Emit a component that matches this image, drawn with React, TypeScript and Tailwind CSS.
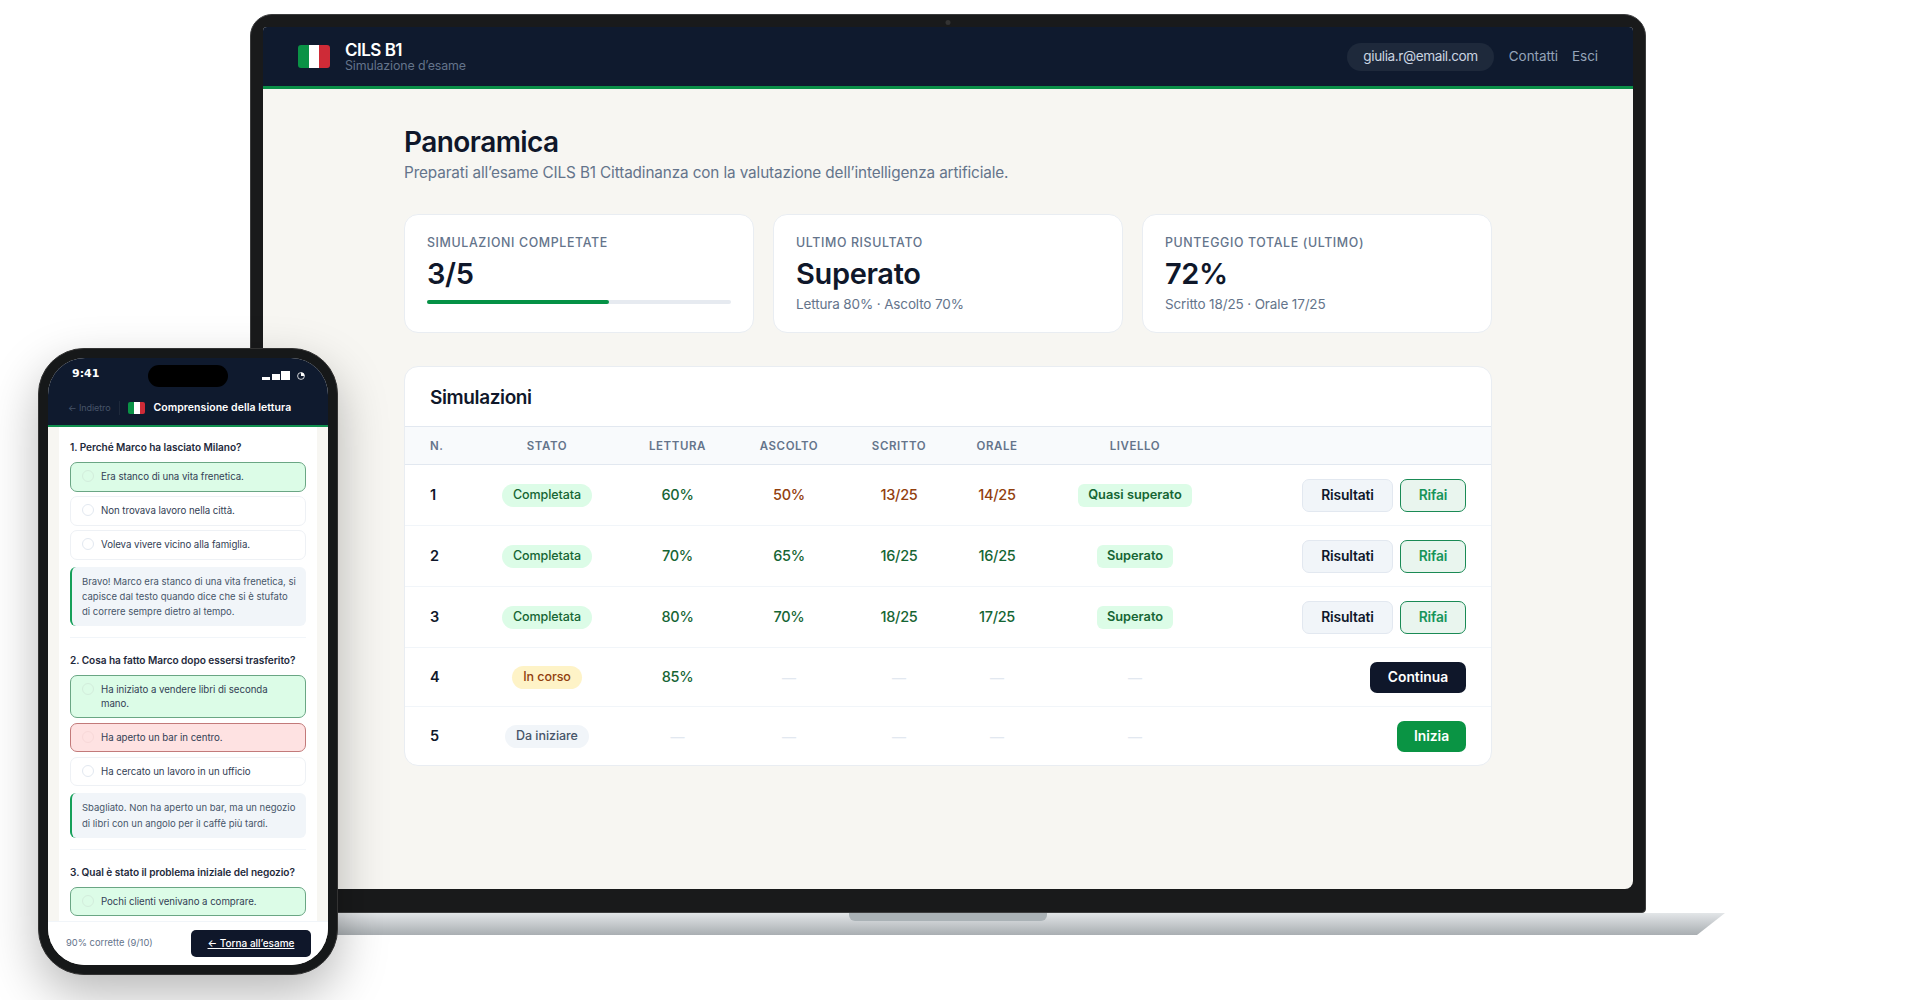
import React from "react";

function Flag({ className }: { className: string }) {
  return (
    <div className={`flex overflow-hidden shrink-0 ${className}`}>
      <div className="flex-1 bg-[#0a9246]" />
      <div className="flex-1 bg-white" />
      <div className="flex-1 bg-[#ce2b37]" />
    </div>
  );
}

function Stat({ label, value, sub, bar }: { label: string; value: string; sub?: string; bar?: boolean }) {
  return (
    <div className="h-[119px] rounded-[14px] border border-[#e9edf2] bg-white px-[22px] pt-[20px]">
      <div className="text-[12.4px] leading-[16px] font-medium tracking-[0.05em] uppercase text-[#64748b]">{label}</div>
      <div className="mt-[5px] text-[29px] leading-[36px] font-semibold tracking-[-0.012em] text-[#0f172a]">{value}</div>
      {sub && <div className="mt-[2px] text-[13.5px] leading-[20px] tracking-[-0.01em] text-[#64748b]">{sub}</div>}
      {bar && (
        <div className="mt-[8px] h-[4px] rounded-full bg-[#e6eaf0]">
          <div className="h-full w-[60%] rounded-full bg-[#059145]" />
        </div>
      )}
    </div>
  );
}

const cols = "grid grid-cols-[82px_120px_141px_82px_138px_58px_218px_247px] items-center";

function Score({ v }: { v: string }) {
  if (v === "—") return <div className="text-center text-[14px] text-[#e2e8f0]">—</div>;
  const bad = v === "50%" || v === "13/25" || v === "14/25";
  return (
    <div className={`text-center text-[14.5px] font-medium tracking-[-0.02em] ${bad ? "text-[#92400e]" : "text-[#166534]"}`}>
      {v}
    </div>
  );
}

function Risultati() {
  return (
    <button className="h-[33px] w-[91px] rounded-[7px] border border-[#e2e8f0] bg-[#f1f5f9] text-[13.8px] font-semibold tracking-[-0.01em] text-[#0f172a]">
      Risultati
    </button>
  );
}
function Rifai() {
  return (
    <button className="h-[33px] w-[66px] rounded-[7px] border-[1.5px] border-[#1a8a55] bg-[#e9f5ee] text-[13.8px] font-semibold tracking-[-0.01em] text-[#17945a]">
      Rifai
    </button>
  );
}

function Row({
  n, stato, statoCls, s, livello, last, h,
}: {
  n: string; stato: string; statoCls: string; s: string[]; livello?: string; last: React.ReactNode; h: string;
}) {
  return (
    <div className={`${cols} ${h} border-b border-[#f1f5f9] last:border-b-0`}>
      <div className="pl-[25px] text-[14.5px] font-semibold text-[#0f172a]">{n}</div>
      <div className="flex justify-center">
        <span className={`rounded-full px-[11px] h-[23px] flex items-center pt-[1px] text-[12.5px] font-medium tracking-[-0.005em] ${statoCls}`}>{stato}</span>
      </div>
      {s.map((v, i) => <Score key={i} v={v} />)}
      <div className="flex justify-center">
        {livello ? (
          <span className="flex h-[23px] items-center rounded-[6px] bg-[#dcfce7] px-[10px] text-[12.8px] font-semibold text-[#166534]">{livello}</span>
        ) : (
          <span className="text-[14px] text-[#e2e8f0]">—</span>
        )}
      </div>
      <div className="flex justify-end gap-[7px] pr-[25px]">{last}</div>
    </div>
  );
}

function Opt({ t, kind }: { t: string; kind?: "ok" | "ko" }) {
  const cls =
    kind === "ok"
      ? "border-[#6aa684] bg-[#dcfce7]"
      : kind === "ko"
      ? "border-[#c27a7a] bg-[#fee2e2]"
      : "border-[#eef1f5] bg-white";
  const radio = kind === "ok" ? "border-[#d3eddc]" : kind === "ko" ? "border-[#f8d9d9]" : "border-[#e2e8f0]";
  return (
    <div className={`flex items-start rounded-[7px] border px-[11px] py-[7px] ${cls}`}>
      <span className={`mr-[7px] h-[12px] w-[12px] shrink-0 rounded-full border-[1.5px] ${radio}`} />
      <span className="text-[9.7px] leading-[13.5px] tracking-[-0.005em] text-[#334155]">{t}</span>
    </div>
  );
}

function Feedback({ children }: { children: React.ReactNode }) {
  return (
    <div className="mt-[7px] rounded-[6px] border-l-2 border-[#16a05a] bg-[#f1f5f9] px-[10px] py-[7px] text-[9.5px] leading-[15.3px] text-[#475569]">
      {children}
    </div>
  );
}

function Q({ children }: { children: React.ReactNode }) {
  return <div className="mb-[8px] text-[10.1px] leading-[14px] font-semibold tracking-[-0.005em] text-[#1e293b]">{children}</div>;
}

export default function App() {
  return (
    <div className="relative h-[1000px] w-[1920px] overflow-hidden bg-white font-['Inter',sans-serif]">
      {/* Laptop */}
      <div className="ml-[250px] pt-[14px] w-[1396px]">
        <div className="relative h-[899px] rounded-t-[22px] rounded-b-[4px] border border-[#3b3c3d] bg-[#191a1b] px-[12px] pt-[12px]">
          <div className="absolute left-1/2 top-[5px] h-[5px] w-[5px] -translate-x-1/2 rounded-full bg-[#333]" />
          <div className="flex h-[862px] flex-col overflow-hidden rounded-b-[8px] rounded-t-[4px] bg-[#f7f6f2]">
            <header className="flex h-[62px] shrink-0 items-center border-b-[3px] border-[#0a8f47] bg-[#0f1a2e] pl-[35px] pr-[35px]">
              <Flag className="h-[23px] w-[32px] rounded-[3px]" />
              <div className="ml-[15px]">
                <div className="text-[17px] leading-[18px] font-semibold tracking-[-0.03em] text-white">CILS B1</div>
                <div className="text-[12.4px] leading-[14px] tracking-[-0.01em] text-[#64748b]">Simulazione d’esame</div>
              </div>
              <div className="ml-auto flex h-[28px] items-center rounded-full bg-[#1e293b] px-[16px] text-[13.6px] tracking-[-0.03em] text-[#cbd5e1]">
                giulia.r@email.com
              </div>
              <span className="ml-[15px] text-[13.5px] tracking-[-0.005em] text-[#94a3b8]">Contatti</span>
              <span className="ml-[14px] text-[13.5px] tracking-[-0.005em] text-[#94a3b8]">Esci</span>
            </header>
            <main className="px-[141px] pt-[36px]">
              <h1 className="text-[28px] leading-[34px] font-semibold tracking-[-0.02em] text-[#0f172a]">Panoramica</h1>
              <p className="mt-[3px] text-[15.3px] leading-[22px] tracking-[-0.008em] text-[#64748b]">
                Preparati all’esame CILS B1 Cittadinanza con la valutazione dell’intelligenza artificiale.
              </p>
              <div className="mt-[30px] grid grid-cols-3 gap-[19px]">
                <Stat label="Simulazioni completate" value="3/5" bar />
                <Stat label="Ultimo risultato" value="Superato" sub="Lettura 80% · Ascolto 70%" />
                <Stat label="Punteggio totale (ultimo)" value="72%" sub="Scritto 18/25 · Orale 17/25" />
              </div>
              <div className="mt-[33px] overflow-hidden rounded-[14px] border border-[#e9edf2] bg-white">
                <div className="flex h-[59px] items-center pl-[25px] pt-[3px] text-[19px] font-semibold tracking-[-0.02em] text-[#0f172a]">Simulazioni</div>
                <div className={`${cols} h-[39px] border-y border-[#e2e8f0] bg-[#f8fafc] pt-[2px] text-[11.5px] font-semibold tracking-[0.05em] text-[#64748b]`}>
                  <div className="pl-[25px]">N.</div>
                  <div className="text-center">STATO</div>
                  <div className="text-center">LETTURA</div>
                  <div className="text-center">ASCOLTO</div>
                  <div className="text-center">SCRITTO</div>
                  <div className="text-center">ORALE</div>
                  <div className="text-center">LIVELLO</div>
                  <div />
                </div>
                <Row h="h-[61px]" n="1" stato="Completata" statoCls="bg-[#dcfce7] text-[#166534]" s={["60%", "50%", "13/25", "14/25"]} livello="Quasi superato" last={<><Risultati /><Rifai /></>} />
                <Row h="h-[61px]" n="2" stato="Completata" statoCls="bg-[#dcfce7] text-[#166534]" s={["70%", "65%", "16/25", "16/25"]} livello="Superato" last={<><Risultati /><Rifai /></>} />
                <Row h="h-[61px]" n="3" stato="Completata" statoCls="bg-[#dcfce7] text-[#166534]" s={["80%", "70%", "18/25", "17/25"]} livello="Superato" last={<><Risultati /><Rifai /></>} />
                <Row h="h-[59px]" n="4" stato="In corso" statoCls="bg-[#fef3c7] text-[#92400e]" s={["85%", "—", "—", "—"]} last={<button className="h-[31px] w-[96px] rounded-[7px] bg-[#0f172a] text-[13.8px] font-semibold text-white">Continua</button>} />
                <Row h="h-[58px]" n="5" stato="Da iniziare" statoCls="bg-[#f1f5f9] text-[#475569]" s={["—", "—", "—", "—"]} last={<button className="h-[31px] w-[69px] rounded-[7px] bg-[#0a9444] text-[13.8px] font-semibold text-white">Inizia</button>} />
              </div>
            </main>
          </div>
        </div>
        {/* Base */}
        <div className="relative -ml-[79px] h-[22px] w-[1554px]">
          <div className="h-full bg-gradient-to-b from-[#e3e6e8] to-[#a9aeb2] [clip-path:polygon(0_0,100%_0,98.2%_100%,1.8%_100%)]" />
          <div className="absolute left-[678px] top-0 h-[8px] w-[198px] rounded-b-[6px] bg-[#aab2b6]" />
        </div>
      </div>

      {/* Phone */}
      <div className="absolute left-[38px] top-[348px] h-[627px] w-[300px] rounded-[46px] border border-[#333] bg-[#161819] p-[9px] shadow-[0_20px_50px_rgba(0,0,0,0.28)]">
        <div className="flex h-full flex-col overflow-hidden rounded-[37px] bg-[#f7f6f2]">
          <div className="relative h-[69px] shrink-0 border-b-2 border-[#0f8f4e] bg-[#0f1a2e]">
            <div className="absolute left-[24px] top-[9px] font-['DejaVu_Sans',sans-serif] text-[11px] leading-[14px] font-bold text-white">9:41</div>
            <div className="absolute left-[100px] top-[7px] h-[22px] w-[80px] rounded-full bg-black" />
            <svg className="absolute left-[214px] top-[11px]" width="44" height="14" viewBox="0 0 44 14" fill="#fff">
              <rect x="0" y="8" width="8" height="3" />
              <rect x="10" y="5" width="8" height="6" />
              <rect x="19" y="2" width="9" height="9" />
              <circle cx="39" cy="7" r="3.4" fill="none" stroke="#fff" strokeWidth="0.8" />
              <path d="M39 7V3.6A3.4 3.4 0 0 1 42.4 7Z" />
            </svg>
            <div className="absolute left-[20px] top-[43px] flex h-[14px] items-center">
              <span className="text-[9px] tracking-[-0.01em] text-[#475569]">← Indietro</span>
              <span className="ml-[9px] h-[14px] w-px bg-[#1e293b]" />
              <Flag className="ml-[8px] h-[12px] w-[17px] rounded-[2px]" />
              <span className="ml-[8px] text-[10.5px] font-semibold tracking-[0.005em] text-white">Comprensione della lettura</span>
            </div>
          </div>
          <div className="mx-[11px] min-h-0 flex-1 overflow-hidden bg-white px-[11px] pt-[13px]">
            <Q>1. Perché Marco ha lasciato Milano?</Q>
            <div className="flex flex-col gap-[4.5px]">
              <Opt t="Era stanco di una vita frenetica." kind="ok" />
              <Opt t="Non trovava lavoro nella città." />
              <Opt t="Voleva vivere vicino alla famiglia." />
            </div>
            <Feedback>Bravo! Marco era stanco di una vita frenetica, si capisce dal testo quando dice che si è stufato di correre sempre dietro al tempo.</Feedback>
            <div className="mb-[15px] mt-[11px] h-px bg-[#f1f5f9]" />
            <Q>2. Cosa ha fatto Marco dopo essersi trasferito?</Q>
            <div className="flex flex-col gap-[4.5px]">
              <Opt t="Ha iniziato a vendere libri di seconda mano." kind="ok" />
              <Opt t="Ha aperto un bar in centro." kind="ko" />
              <Opt t="Ha cercato un lavoro in un ufficio" />
            </div>
            <Feedback>Sbagliato. Non ha aperto un bar, ma un negozio di libri con un angolo per il caffè più tardi.</Feedback>
            <div className="mb-[15px] mt-[11px] h-px bg-[#f1f5f9]" />
            <Q>3. Qual è stato il problema iniziale del negozio?</Q>
            <Opt t="Pochi clienti venivano a comprare." kind="ok" />
          </div>
          <div className="flex h-[44px] shrink-0 items-center justify-between border-t border-[#f1f5f9] bg-white pl-[18px] pr-[17px]">
            <span className="text-[9.4px] text-[#64748b]">90% corrette (9/10)</span>
            <span className="flex h-[27px] w-[120px] items-center justify-center rounded-[5px] bg-[#0f172a] text-[10px] font-medium text-white underline">
              ← Torna all’esame
            </span>
          </div>
        </div>
      </div>
    </div>
  );
}
